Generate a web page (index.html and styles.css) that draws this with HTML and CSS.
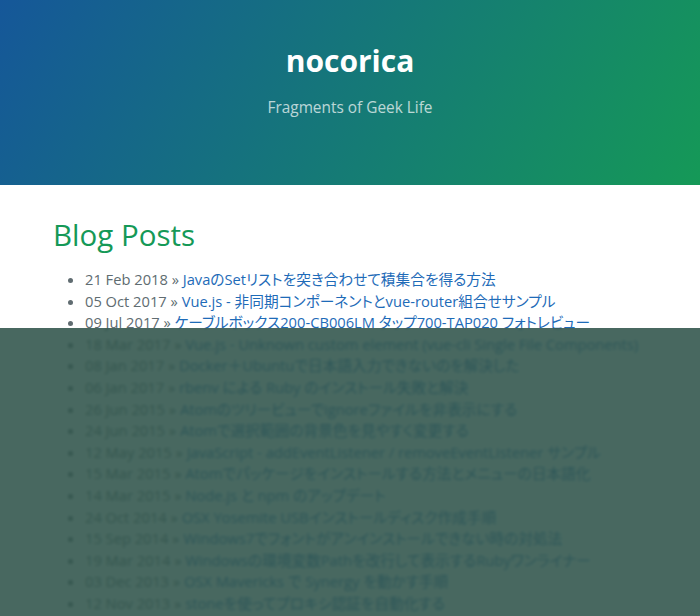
FILE: index.html
```html
<!DOCTYPE html>
<html lang="ja">
<head>
<meta charset="utf-8">
<title>nocorica</title>
<link rel="stylesheet" href="styles.css">
</head>
<body>
<header class="page-header">
  <h1 class="project-name">nocorica</h1>
  <p class="project-tagline">Fragments of Geek Life</p>
</header>
<main class="main-content">
  <h2 class="section-title">Blog Posts</h2>
  <ul class="post-list">
    <li>21 Feb 2018 » <a href="#">JavaのSetリストを突き合わせて積集合を得る方法</a></li>
    <li>05 Oct 2017 » <a href="#">Vue.js - 非同期コンポーネントとvue-router組合せサンプル</a></li>
    <li>09 Jul 2017 » <a href="#">ケーブルボックス200-CB006LM タップ700-TAP020 フォトレビュー</a></li>
    <li>18 Mar 2017 » <a href="#">Vue.js - Unknown custom element (vue-cli Single File Components)</a></li>
    <li>08 Jan 2017 » <a href="#">Docker＋Ubuntuで日本語入力できないのを解決した</a></li>
    <li>06 Jan 2017 » <a href="#">rbenv による Ruby のインストール失敗と解決</a></li>
    <li>26 Jun 2015 » <a href="#">Atomのツリービューでignoreファイルを非表示にする</a></li>
    <li>24 Jun 2015 » <a href="#">Atomで選択範囲の背景色を見やすく変更する</a></li>
    <li>12 May 2015 » <a href="#">JavaScript - addEventListener / removeEventListener サンプル</a></li>
    <li>15 Mar 2015 » <a href="#">Atomでパッケージをインストールする方法とメニューの日本語化</a></li>
    <li>14 Mar 2015 » <a href="#">Node.js と npm のアップデート</a></li>
    <li>24 Oct 2014 » <a href="#">OSX Yosemite USBインストールディスク作成手順</a></li>
    <li>15 Sep 2014 » <a href="#">Windows7でフォントがアンインストールできない時の対処法</a></li>
    <li>19 Mar 2014 » <a href="#">Windowsの環境変数Pathを改行して表示するRubyワンライナー</a></li>
    <li>03 Dec 2013 » <a href="#">OSX Mavericks で Synergy を動かす手順</a></li>
    <li>12 Nov 2013 » <a href="#">stoneを使ってプロキシ認証を自動化する</a></li>
  </ul>
</main>
<div class="dim-overlay"></div>
</body>
</html>
```
FILE: styles.css
```css
html, body {
  margin: 0;
  padding: 0;
}
body {
  font-family: "Open Sans", "Noto Sans CJK JP", sans-serif;
  color: #606c71;
  background: #fff;
  font-size: 14.4px;
  line-height: 1.5;
  overflow: hidden;
}
.page-header {
  box-sizing: border-box;
  height: 185px;
  padding: 37px 53px 0;
  text-align: center;
  color: #fff;
  background-image: linear-gradient(120deg, #155799, #159957);
}
.project-name {
  margin: 0;
  font-size: 30px;
  line-height: 48px;
  font-weight: 700;
}
.project-tagline {
  margin: 11px 0 0;
  font-size: 15.4px;
  line-height: 23px;
  font-weight: 400;
  opacity: 0.7;
}
.main-content {
  padding: 31px 53px 0;
}
.section-title {
  margin: 0 0 16px;
  font-size: 29.5px;
  line-height: 37px;
  font-weight: 400;
  color: #159957;
}
.post-list {
  margin: 0;
  padding-left: 32px;
  font-size: 14.7px;
  font-feature-settings: "palt";
}
.post-list li {
  line-height: 21.6px;
  white-space: nowrap;
}
.post-list a {
  color: #1e6bb8;
  text-decoration: none;
}
.dim-overlay {
  position: fixed;
  top: 328px;
  left: 0;
  right: 0;
  bottom: 0;
  background: rgba(47, 83, 74, 0.88);
  -webkit-backdrop-filter: blur(1.5px);
  backdrop-filter: blur(1.5px);
}
```
